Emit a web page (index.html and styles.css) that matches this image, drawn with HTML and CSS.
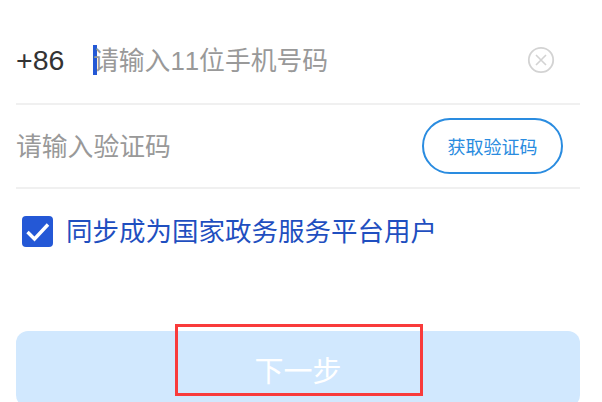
FILE: index.html
```html
<!DOCTYPE html>
<html lang="zh-CN">
<head>
  <meta charset="UTF-8">
  <title>手机号验证</title>
  <link rel="stylesheet" href="styles.css">
</head>
<body>

<div class="form">
  <!-- Phone -->
  <div class="row row-phone">
    <span class="code">+86</span>
    <span class="caret"></span>
    <span class="hint">请输入11位手机号码</span>
    <svg class="clear" width="28" height="28" viewBox="0 0 28 28" fill="none" stroke="#d3d3d3">
      <circle cx="14" cy="14" r="12.2" stroke-width="1.8"/>
      <path d="M9 9l10 10M19 9L9 19" stroke-width="1.6"/>
    </svg>
  </div>

  <!-- Verify code -->
  <div class="row row-verify">
    <span class="hint">请输入验证码</span>
    <button class="get-code">获取验证码</button>
  </div>

  <!-- Agreement -->
  <div class="agree">
    <span class="check">
      <svg width="31" height="31" viewBox="0 0 31 31" fill="none" stroke="#fff" stroke-width="3.4">
        <path d="M5.500 16l7 7L26 8.500"/>
      </svg>
    </span>
    <span class="agree-text">同步成为国家政务服务平台用户</span>
  </div>

  <button class="next">下一步</button>
</div>

<div class="highlight"></div>

</body>
</html>
```

FILE: styles.css
```css
* {
  margin: 0;
  padding: 0;
  box-sizing: border-box;
  font-family: "Liberation Sans", "Noto Sans CJK SC", sans-serif;
}

body {
  width: 602px;
  height: 402px;
  overflow: hidden;
  background: #fff;
  position: relative;
}

.form {
  padding: 0 22px 0 16px;
}

.row {
  display: flex;
  align-items: center;
  border-bottom: 2px solid #f0f0f0;
}

.row-phone {
  height: 105px;
  padding-top: 17px;
}

.row-verify {
  height: 84px;
  justify-content: space-between;
}

.code {
  font-size: 28.5px;
  color: #333;
  width: 77px;
}

.caret {
  width: 4px;
  height: 30px;
  background: #2458d6;
  margin-right: -4px;
}

.hint {
  font-size: 25.8px;
  color: #999;
  font-kerning: none;
  margin-top: -3px;
}

.clear {
  margin-left: auto;
  margin-right: 25px;
}

.get-code {
  width: 141px;
  height: 56px;
  margin-right: 17px;
  border: 2px solid #2a8ce0;
  border-radius: 28px;
  background: #fff;
  color: #2a8ce0;
  font-size: 18px;
}

.agree {
  display: flex;
  align-items: center;
  gap: 13px;
  height: 31px;
  margin-top: 27px;
  padding-left: 6px;
}

.check {
  width: 31px;
  height: 31px;
  background: #2458d6;
  border-radius: 4px;
}

.check svg {
  display: block;
}

.agree-text {
  font-size: 26.5px;
  color: #1f4fc0;
  margin-top: -5px;
}

.next {
  display: block;
  width: 564px;
  height: 76px;
  margin-top: 84px;
  border: none;
  border-radius: 12px;
  background: #d1e8fe;
  color: #fff;
  font-size: 29px;
}

.highlight {
  position: absolute;
  left: 175px;
  top: 324px;
  width: 248px;
  height: 72px;
  border: 3px solid #f93b3b;
}
```
